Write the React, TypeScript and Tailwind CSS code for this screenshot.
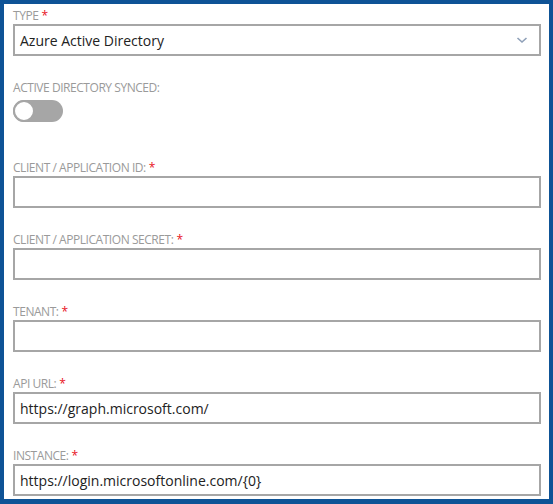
import React from "react";

const labelFont = { fontFamily: '"Segoe UI", "Open Sans", "Noto Sans", sans-serif' };

function Label({ text, required }: { text: string; required?: boolean }) {
  return (
    <div className="h-4 text-[12px] leading-4 uppercase text-[#9a9a9a] tracking-[-0.45px]" style={labelFont}>
      {text}
      {required && <span className="text-[#e81123] ml-[3px]">*</span>}
    </div>
  );
}

function TextField({ label, value }: { label: string; value?: string }) {
  return (
    <div className="mb-6">
      <Label text={label} required />
      <input
        readOnly
        value={value ?? ""}
        className="w-full h-8 border-2 border-[#a6a6a6] bg-white px-[5px] text-[14px] text-[#222] outline-none"
        style={labelFont}
      />
    </div>
  );
}

export default function App() {
  return (
    <div className="w-[553px] h-[504px] bg-[#0e5396] pt-1 pl-1 pr-1 pb-[5px]">
      <div className="h-full bg-white pl-[9px] pr-2 pt-1 overflow-hidden">
        {/* type */}
        <div className="mb-6">
          <Label text="Type" required />
          <div className="h-8 border-2 border-[#a6a6a6] flex items-center justify-between px-[5px] text-[14px] text-[#222]" style={labelFont}>
            <span>Azure Active Directory</span>
            <svg width="12" height="8" viewBox="0 0 12 8" className="mr-[6px]">
              <path d="M1.5 2 L6 6 L10.5 2" fill="none" stroke="#8fa0b8" strokeWidth="1.6" />
            </svg>
          </div>
        </div>

        {/* synced */}
        <div className="mb-[38px]">
          <Label text="Active Directory Synced:" />
          <div className="mt-1 w-[50px] h-[22px] rounded-full bg-[#a6a6a6] relative">
            <div className="absolute left-0 top-0 w-[22px] h-[22px] rounded-full bg-white border-2 border-[#a6a6a6]" />
          </div>
        </div>

        <TextField label="Client / Application ID:" />
        <TextField label="Client / Application Secret:" />
        <TextField label="Tenant:" />
        <TextField label="API URL:" value="https://graph.microsoft.com/" />
        <TextField label="Instance:" value="https://login.microsoftonline.com/{0}" />
      </div>
    </div>
  );
}
